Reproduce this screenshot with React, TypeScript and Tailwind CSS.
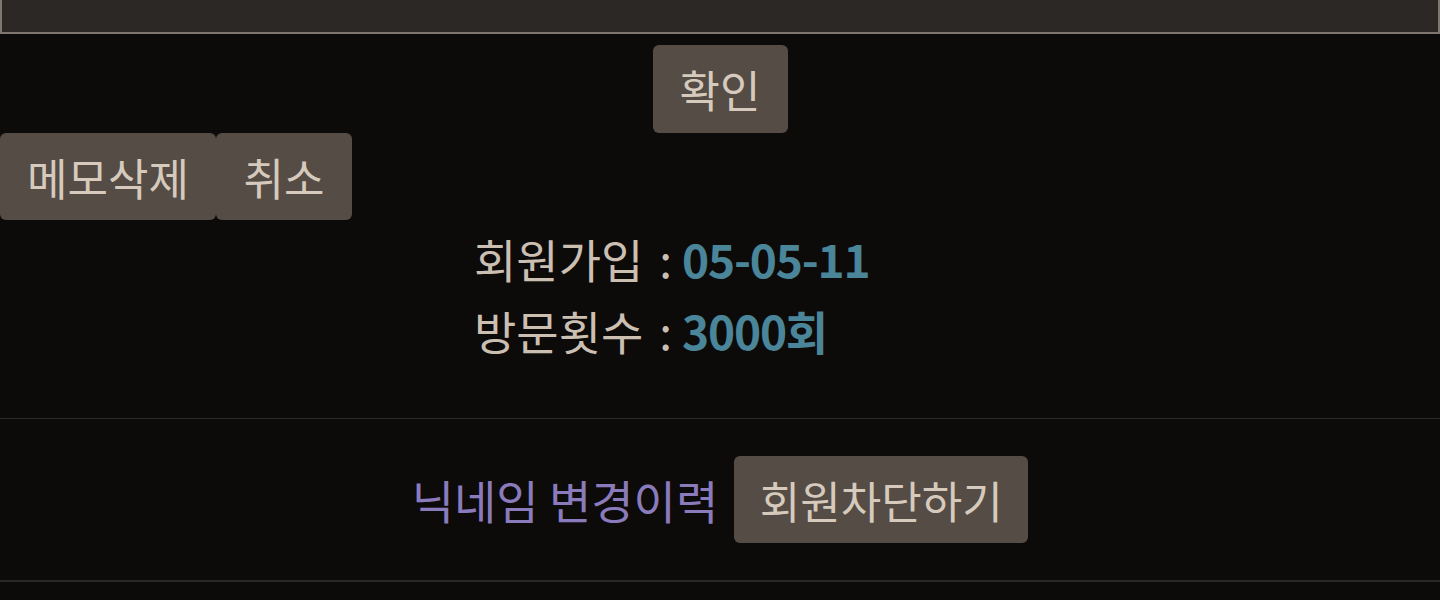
import React from "react";

const font = { fontFamily: '"Noto Sans CJK KR", "Noto Sans", sans-serif' };

export default function App() {
  return (
    <div className="w-[1440px] h-[600px] overflow-hidden bg-[#0d0b0a]" style={font}>
      <div className="h-[34px] bg-[#2c2825] border-l-2 border-r-2 border-b-2 border-[#7d776f]" />
      <div className="flex justify-center pt-[11px]">
        <button className="h-[88px] w-[135px] rounded-[6px] bg-[#554c46] text-[#d6cabd] text-[44px] leading-none">
          확인
        </button>
      </div>
      <div className="flex">
        <button className="h-[87px] w-[216px] rounded-[6px] bg-[#554c46] text-[#d6cabd] text-[44px] leading-none">
          메모삭제
        </button>
        <button className="h-[87px] w-[136px] rounded-[6px] bg-[#554c46] text-[#d6cabd] text-[44px] leading-none">
          취소
        </button>
      </div>
      <div className="ml-[474px] pt-[2px] text-[46px] leading-[72px] text-[#cbbfb2]">
        <div className="flex">
          <span>회원가입</span>
          <span className="ml-[16px] mr-[10px]">:</span>
          <span className="text-[#4b8599] font-bold tracking-[-1.2px]">05-05-11</span>
        </div>
        <div className="flex">
          <span>방문횟수</span>
          <span className="ml-[16px] mr-[10px]">:</span>
          <span className="text-[#4b8599] font-bold tracking-[-1.2px]">3000회</span>
        </div>
      </div>
      <div className="mt-[52px] border-t border-[#2b2826]" />
      <div className="flex justify-center items-center gap-[16px] h-[161px]">
        <span className="text-[#8a7bbd] text-[46px]">닉네임 변경이력</span>
        <button className="h-[87px] w-[294px] rounded-[6px] bg-[#554c46] text-[#d6cabd] text-[44px] leading-none">
          회원차단하기
        </button>
      </div>
      <div className="border-t-2 border-[#2a2725]" />
    </div>
  );
}
